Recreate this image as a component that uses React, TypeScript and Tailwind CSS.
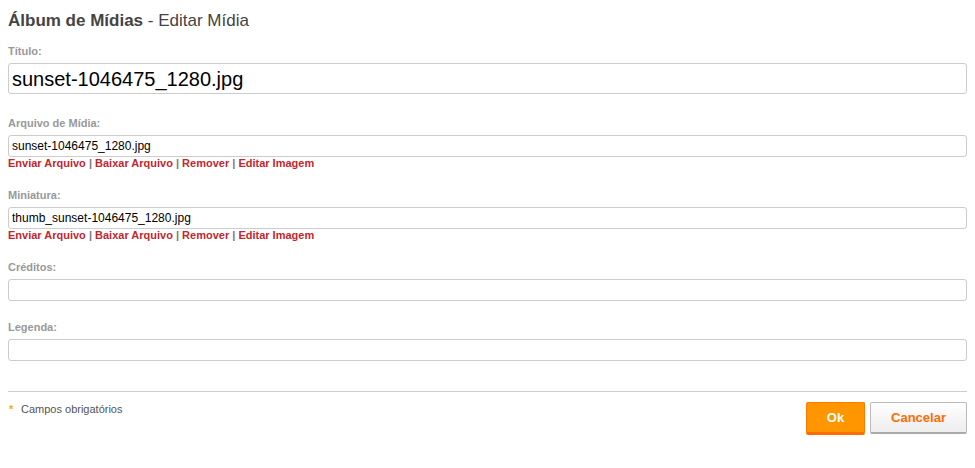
import React from "react";

const Links = () => (
  <div className="text-[11px] leading-[12px] font-bold text-[#777]">
    <a className="text-[#c1272d]">Enviar Arquivo</a> | <a className="text-[#c1272d]">Baixar Arquivo</a> |{" "}
    <a className="text-[#c1272d]">Remover</a> | <a className="text-[#c1272d]">Editar Imagem</a>
  </div>
);

const Label = ({ children, className = "" }: { children: React.ReactNode; className?: string }) => (
  <div className={"text-[11px] leading-[14px] font-bold text-[#999] " + className}>{children}</div>
);

export default function App() {
  return (
    <div className="w-[975px] h-[468px] bg-white px-2 pt-[10px]" style={{ fontFamily: '"Liberation Sans", Arial, sans-serif' }}>
      <h1 className="text-[17px] leading-[22px] text-[#444]">
        <span className="font-bold">Álbum de Mídias</span> - Editar Mídia
      </h1>

      <Label className="mt-[12px]">Título:</Label>
      <div className="mt-[5px] h-[31px] border border-[#ccc] rounded-[3px] px-[3px] flex items-center text-[20px] text-black">
        sunset-1046475_1280.jpg
      </div>

      <Label className="mt-[22px]">Arquivo de Mídia:</Label>
      <div className="mt-[5px] h-[22px] border border-[#ccc] rounded-[3px] px-[3px] flex items-center text-[12px] text-black">
        sunset-1046475_1280.jpg
      </div>
      <Links />

      <Label className="mt-[19px]">Miniatura:</Label>
      <div className="mt-[5px] h-[22px] border border-[#ccc] rounded-[3px] px-[3px] flex items-center text-[12px] text-black">
        thumb_sunset-1046475_1280.jpg
      </div>
      <Links />

      <Label className="mt-[19px]">Créditos:</Label>
      <div className="mt-[5px] h-[22px] border border-[#ccc] rounded-[3px]" />

      <Label className="mt-[19px]">Legenda:</Label>
      <div className="mt-[5px] h-[22px] border border-[#ccc] rounded-[3px]" />

      <div className="mt-[30px] border-t border-[#ccc]" />

      <div className="mt-[10px] flex justify-between items-start">
        <div className="flex items-start text-[11px] leading-[14px] text-[#555]">
          <span className="text-[#fa0] font-bold w-[13px] pl-[1px]">*</span>
          <span>Campos obrigatórios</span>
        </div>
        <div className="flex gap-[5px]">
          <button className="w-[59px] h-[33px] bg-[#ff9600] border border-[#ff7a00] border-b-[3px] border-b-[#ff6c00] rounded-[2px] text-white font-bold text-[13px]">
            Ok
          </button>
          <button className="w-[97px] h-[32px] bg-gradient-to-b from-white to-[#ededed] border border-[#bbb] border-b-[2px] border-b-[#aaa] rounded-[2px] text-[#ff6c00] font-bold text-[13px]">
            Cancelar
          </button>
        </div>
      </div>
    </div>
  );
}
